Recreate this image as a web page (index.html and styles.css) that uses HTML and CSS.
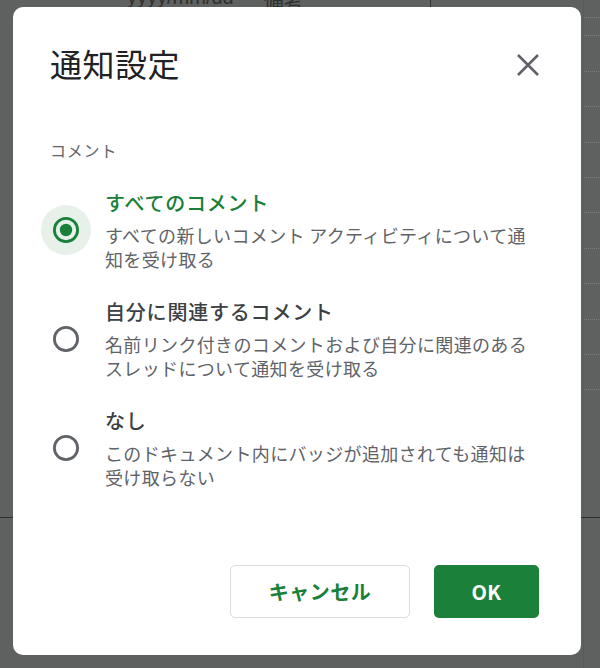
FILE: index.html
```html
<!DOCTYPE html>
<html lang="ja">
<head>
<meta charset="utf-8">
<link rel="stylesheet" href="styles.css">
</head>
<body>
<div class="sheet">
  <div class="sheet-head"><span class="col-date">yyyy/mm/dd</span><span class="col-note">備考</span></div>
  <div class="sheet-vline"></div>
  <div class="sheet-rows">
    <div></div><div></div><div></div><div></div><div></div><div></div><div></div><div></div><div></div><div></div><div></div><div></div>
  </div>
  <div class="sheet-hline"></div>
</div>

<div class="dialog" role="dialog">
  <div class="dialog-header">
    <h1 class="dialog-title">通知設定</h1>
    <button class="close-btn" aria-label="閉じる">
      <svg width="24" height="24" viewBox="0 0 24 24"><path d="M2 2 L22 22 M22 2 L2 22" stroke="#5f6368" stroke-width="2.6" fill="none"/></svg>
    </button>
  </div>
  <div class="section-label">コメント</div>
  <div class="options">
    <div class="option selected">
      <div class="radio">
        <svg width="28" height="28" viewBox="0 0 28 28"><circle cx="14" cy="14" r="11.6" fill="none" stroke="#188038" stroke-width="2.8"/><circle cx="14" cy="14" r="6.2" fill="#188038"/></svg>
      </div>
      <div class="option-text">
        <div class="option-title">すべてのコメント</div>
        <div class="option-desc">すべての新しいコメント アクティビティについて通知を受け取る</div>
      </div>
    </div>
    <div class="option">
      <div class="radio">
        <svg width="28" height="28" viewBox="0 0 28 28"><circle cx="14" cy="14" r="11.6" fill="none" stroke="#5f6368" stroke-width="2.8"/></svg>
      </div>
      <div class="option-text">
        <div class="option-title">自分に関連するコメント</div>
        <div class="option-desc">名前リンク付きのコメントおよび自分に関連のあるスレッドについて通知を受け取る</div>
      </div>
    </div>
    <div class="option">
      <div class="radio">
        <svg width="28" height="28" viewBox="0 0 28 28"><circle cx="14" cy="14" r="11.6" fill="none" stroke="#5f6368" stroke-width="2.8"/></svg>
      </div>
      <div class="option-text">
        <div class="option-title">なし</div>
        <div class="option-desc">このドキュメント内にバッジが追加されても通知は受け取らない</div>
      </div>
    </div>
  </div>
  <div class="dialog-actions">
    <button class="btn btn-cancel">キャンセル</button>
    <button class="btn btn-ok">OK</button>
  </div>
</div>
</body>
</html>
```

FILE: styles.css
```css
html, body {
  margin: 0;
  padding: 0;
}
body {
  width: 600px;
  height: 668px;
  overflow: hidden;
  background: #5f6160;
  font-family: "Noto Sans CJK JP", "Noto Sans", sans-serif;
  position: relative;
}
.sheet {
  position: absolute;
  inset: 0;
}
.sheet-head {
  position: absolute;
  left: 127px;
  top: -14px;
  font-family: "Liberation Sans", "Noto Sans CJK JP", sans-serif;
  font-size: 20px;
  color: #2e2f30;
  display: flex;
  gap: 30px;
}
.sheet-vline {
  position: absolute;
  left: 430px;
  top: 0;
  width: 1px;
  height: 8px;
  background: #2e2f30;
}
.sheet-rows {
  position: absolute;
  left: 583px;
  top: 0;
  width: 17px;
  display: flex;
  flex-direction: column;
  border-left: 1px solid #595b5a;
  height: 668px;
}
.sheet-rows div {
  height: 35.4px;
  flex: none;
  box-sizing: border-box;
  border-bottom: 1px dotted #7a7c7b;
  margin-top: -17px;
  margin-bottom: 17px;
}
.sheet-rows div:first-child {
  margin-top: 0;
  height: 18px;
  margin-bottom: 0;
}
.sheet-hline {
  position: absolute;
  left: 0;
  top: 517px;
  width: 600px;
  height: 1px;
  background: #2f3130;
}
.dialog {
  position: absolute;
  left: 13px;
  top: 7px;
  width: 568px;
  height: 648px;
  box-sizing: border-box;
  background: #fff;
  border-radius: 10px;
  padding: 36px 41px 37px 37px;
  display: flex;
  flex-direction: column;
}
.dialog-header {
  display: flex;
  align-items: center;
  justify-content: space-between;
}
.dialog-title {
  margin: 0;
  font-size: 32px;
  line-height: 40px;
  font-weight: 400;
  color: #202124;
  letter-spacing: 0.5px;
}
.close-btn {
  border: none;
  background: none;
  padding: 0;
  width: 24px;
  height: 24px;
  display: flex;
  margin-top: 4px;
}
.section-label {
  margin-top: 57px;
  font-size: 16px;
  line-height: 20px;
  color: #5f6368;
  letter-spacing: 0.8px;
}
.options {
  margin-top: 29px;
  display: flex;
  flex-direction: column;
  gap: 27px;
}
.option {
  display: flex;
  align-items: center;
  gap: 23px;
}
.radio {
  width: 32px;
  height: 32px;
  flex: none;
  display: flex;
  align-items: center;
  justify-content: center;
  position: relative;
}
.radio svg {
  position: relative;
}
.option.selected .radio::before {
  content: "";
  position: absolute;
  left: -9px;
  top: -9px;
  width: 50px;
  height: 50px;
  border-radius: 50%;
  background: #e7f1ea;
}
.option-text {
  flex: 1;
}
.option-title {
  font-size: 20px;
  line-height: 28px;
  font-weight: 500;
  color: #3c4043;
  letter-spacing: 0.8px;
}
.option.selected .option-title {
  color: #188038;
}
.option-desc {
  margin-top: 6px;
  font-size: 18px;
  line-height: 24px;
  color: #5f6368;
  letter-spacing: 0.35px;
  padding-right: 8px;
}
.dialog-actions {
  margin-top: auto;
  display: flex;
  justify-content: flex-end;
  gap: 24px;
  padding-right: 1px;
}
.btn {
  height: 53px;
  border-radius: 5px;
  font-family: "Noto Sans CJK JP", "Noto Sans", sans-serif;
  font-size: 20px;
  font-weight: 700;
  letter-spacing: 0.5px;
  box-sizing: border-box;
}
.btn-cancel {
  width: 180px;
  background: #fff;
  border: 1px solid #dadce0;
  color: #188038;
}
.btn-ok {
  width: 105px;
  background: #1b8039;
  border: none;
  color: #fff;
}
```
